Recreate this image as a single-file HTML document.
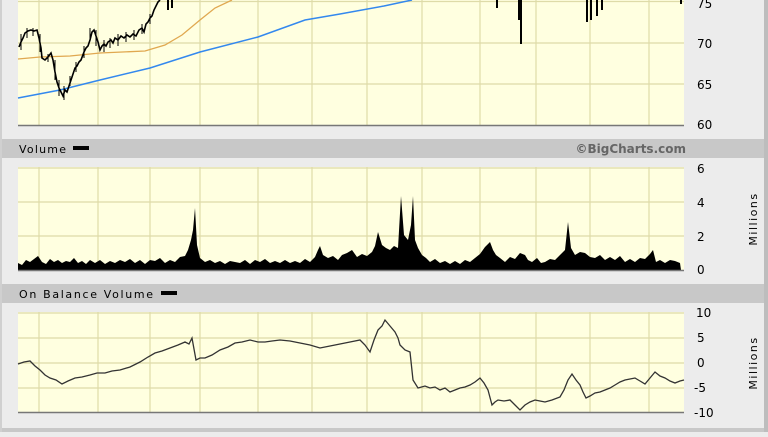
<!DOCTYPE html><html><head><style>body{margin:0;background:#ececec;width:768px;height:432px;overflow:hidden}</style></head><body>
<svg width="768" height="432" xmlns="http://www.w3.org/2000/svg" font-family="DejaVu Sans, sans-serif" font-size="11">
<rect width="768" height="432" fill="#ececec"/>
<rect x="0" y="0" width="2" height="432" fill="#d0d0d0"/>
<rect x="764" y="0" width="4" height="432" fill="#bdbdbd"/>
<rect x="18" y="0" width="666" height="125" fill="#ffffe0"/>
<g stroke="#dedba8" stroke-width="1.2">
<path d="M39 0V125M98 0V125M150 0V125M200 0V125M258 0V125M312 0V125M367 0V125M422 0V125M480 0V125M536 0V125M590 0V125M649 0V125"/>
<path d="M18 1.5H684M18 43H684M18 84H684"/>
</g>
<path d="M18 125.5H684" stroke="#777" stroke-width="1.5"/>
<path d="M18 59 L40 57 L70 56 L100 53 L145 51 L165 45 L182 35 L200 20 L215 8 L232 0" stroke="#e0a850" stroke-width="1.3" fill="none"/>
<path d="M18 98 L60 90 L100 80 L150 68 L200 52 L258 37 L305 20 L340 14 L384 6 L412 0" stroke="#3388ee" stroke-width="1.5" fill="none"/>
<path d="M19 47 L21 42 L23 38 L25 33 L28 31 L31 30 L34 31 L37 30 L39 38 L41 48 L42 58 L45 60 L48 57 L51 53 L53 60 L55 72 L57 82 L59 88 L61 92 L63 96 L65 90 L67 92 L69 86 L71 80 L73 74 L75 68 L77 66 L79 62 L81 60 L84 52 L86 48 L88 46 L90 40 L92 32 L94 30 L96 36 L98 42 L100 50 L102 46 L104 44 L106 46 L108 42 L111 40 L113 43 L115 38 L118 40 L121 36 L124 38 L127 35 L130 37 L133 34 L136 36 L139 30 L142 28 L144 32 L146 24 L148 22 L150 18 L152 16 L154 10 L156 6 L158 2 L160 0" stroke="#000" stroke-width="1.6" fill="none"/>
<g stroke="#000" stroke-width="1"><path d="M21 34V50M27 28V38M33 28V36M40 34V52M48 54V62M55 60V80M59 80V96M64 86V100M70 76V86M76 62V72M84 46V58M90 28V40M96 30V46M104 40V52M110 38V48M118 34V46M126 32V42M134 30V40M142 24V34M150 14V24"/></g>
<path d="M168 0V10M172 0V8M497 0V8M521 0V44M519 0V20M587 0V22M591 0V20M597 0V16M602 0V10M681 0V4" stroke="#000" stroke-width="2"/>
<g font-size="12" fill="#000"><text x="697" y="8">75</text><text x="697" y="48">70</text><text x="697" y="89">65</text><text x="697" y="129">60</text></g>
<rect x="2" y="139" width="762" height="19" fill="#c8c8c8"/>
<text x="19" y="153" fill="#000" textLength="47">Volume</text>
<rect x="73" y="146" width="16" height="4" fill="#000"/>
<text x="686" y="153" font-weight="bold" fill="#666" text-anchor="end" font-size="12">©BigCharts.com</text>
<rect x="18" y="167" width="666" height="103" fill="#ffffe0"/>
<g stroke="#dedba8" stroke-width="1.2">
<path d="M39 167V270M98 167V270M150 167V270M200 167V270M258 167V270M312 167V270M367 167V270M422 167V270M480 167V270M536 167V270M590 167V270M649 167V270"/>
<path d="M18 168H684M18 202H684M18 236H684"/>
</g>
<path d="M18 270 L18 263 L22 265 L26 260 L30 262 L34 259 L38 256 L42 262 L46 264 L50 259 L54 262 L58 260 L62 263 L66 261 L70 262 L74 258 L78 263 L82 261 L86 264 L90 260 L95 263 L100 260 L105 264 L110 261 L115 263 L120 260 L125 262 L130 259 L135 263 L140 260 L145 264 L150 260 L155 261 L160 258 L165 263 L170 260 L175 262 L180 257 L185 256 L188 250 L191 240 L193 230 L195 208 L197 245 L200 258 L205 262 L210 260 L215 263 L220 261 L225 264 L230 261 L240 263 L245 260 L250 264 L255 260 L260 262 L265 259 L270 263 L275 261 L280 263 L285 260 L290 263 L295 261 L300 263 L305 259 L310 262 L315 257 L318 250 L320 246 L323 255 L328 258 L333 256 L338 260 L342 255 L347 253 L352 250 L357 257 L362 254 L367 256 L372 252 L375 246 L378 232 L382 245 L386 248 L390 250 L394 246 L398 248 L401 196 L404 235 L408 240 L411 225 L413 196 L415 240 L418 248 L422 255 L426 258 L430 262 L435 259 L440 263 L445 261 L450 264 L455 261 L460 264 L465 260 L470 262 L475 258 L480 254 L485 247 L490 242 L493 250 L496 255 L500 258 L505 262 L510 257 L515 259 L520 253 L525 255 L528 260 L532 262 L537 258 L541 263 L545 262 L550 259 L555 260 L560 255 L565 250 L568 222 L571 248 L575 255 L580 252 L585 253 L590 257 L595 258 L600 255 L605 260 L610 257 L615 260 L620 256 L625 262 L630 259 L635 262 L640 258 L645 259 L650 254 L653 250 L656 262 L660 260 L665 263 L670 260 L675 261 L680 263 L681 270 Z" fill="#000"/>
<path d="M18 270.5H684" stroke="#777" stroke-width="1.5"/>
<g font-size="12" fill="#000"><text x="697" y="173">6</text><text x="697" y="207">4</text><text x="697" y="241">2</text><text x="697" y="274">0</text></g>
<text transform="translate(757,219) rotate(-90)" font-size="11" text-anchor="middle" letter-spacing="1.5">Millions</text>
<rect x="2" y="284" width="762" height="19" fill="#c8c8c8"/>
<text x="19" y="298" fill="#000" textLength="134">On Balance Volume</text>
<rect x="161" y="291" width="16" height="4" fill="#000"/>
<rect x="18" y="312" width="666" height="100" fill="#ffffe0"/>
<g stroke="#dedba8" stroke-width="1.2">
<path d="M39 312V412M98 312V412M150 312V412M200 312V412M258 312V412M312 312V412M367 312V412M422 312V412M480 312V412M536 312V412M590 312V412M649 312V412"/>
<path d="M18 313H684M18 338H684M18 363H684M18 388H684"/>
</g>
<path d="M18 412.5H684" stroke="#777" stroke-width="1.5"/>
<polyline fill="none" stroke="#333" stroke-width="1.3" points="18,364 24,362 30,361 35,366 40,370 45,375 50,378 56,380 62,384 68,381 75,378 82,377 90,375 97,373 105,373 112,371 120,370 130,367 140,362 148,357 155,353 162,351 170,348 178,345 185,342 189,344 192,338 196,360 200,358 205,358 212,355 220,350 228,347 235,343 242,342 250,340 258,342 265,342 272,341 280,340 290,341 300,343 310,345 320,348 330,346 340,344 350,342 360,340 365,345 370,352 374,340 378,330 382,326 385,320 390,326 395,332 398,338 400,345 405,350 410,352 413,380 418,388 425,386 430,388 435,387 440,390 445,388 450,392 455,390 460,388 465,387 470,385 475,382 480,378 484,383 488,390 492,405 495,402 498,400 504,401 510,400 515,405 520,410 525,405 530,402 535,400 540,401 545,402 552,400 560,397 564,390 568,380 572,374 576,380 580,385 583,392 586,398 590,396 595,393 600,392 605,390 610,388 615,385 620,382 625,380 630,379 635,378 640,381 645,384 650,378 655,372 660,376 665,378 670,381 675,383 680,381 684,380"/>
<g font-size="12" fill="#000"><text x="696" y="317">10</text><text x="697" y="342">5</text><text x="697" y="367">0</text><text x="694" y="392">-5</text><text x="694" y="417">-10</text></g>
<text transform="translate(757,363) rotate(-90)" font-size="11" text-anchor="middle" letter-spacing="1.5">Millions</text>
<rect x="2" y="428" width="762" height="4" fill="#c8c8c8"/>
</svg>
</body></html>
